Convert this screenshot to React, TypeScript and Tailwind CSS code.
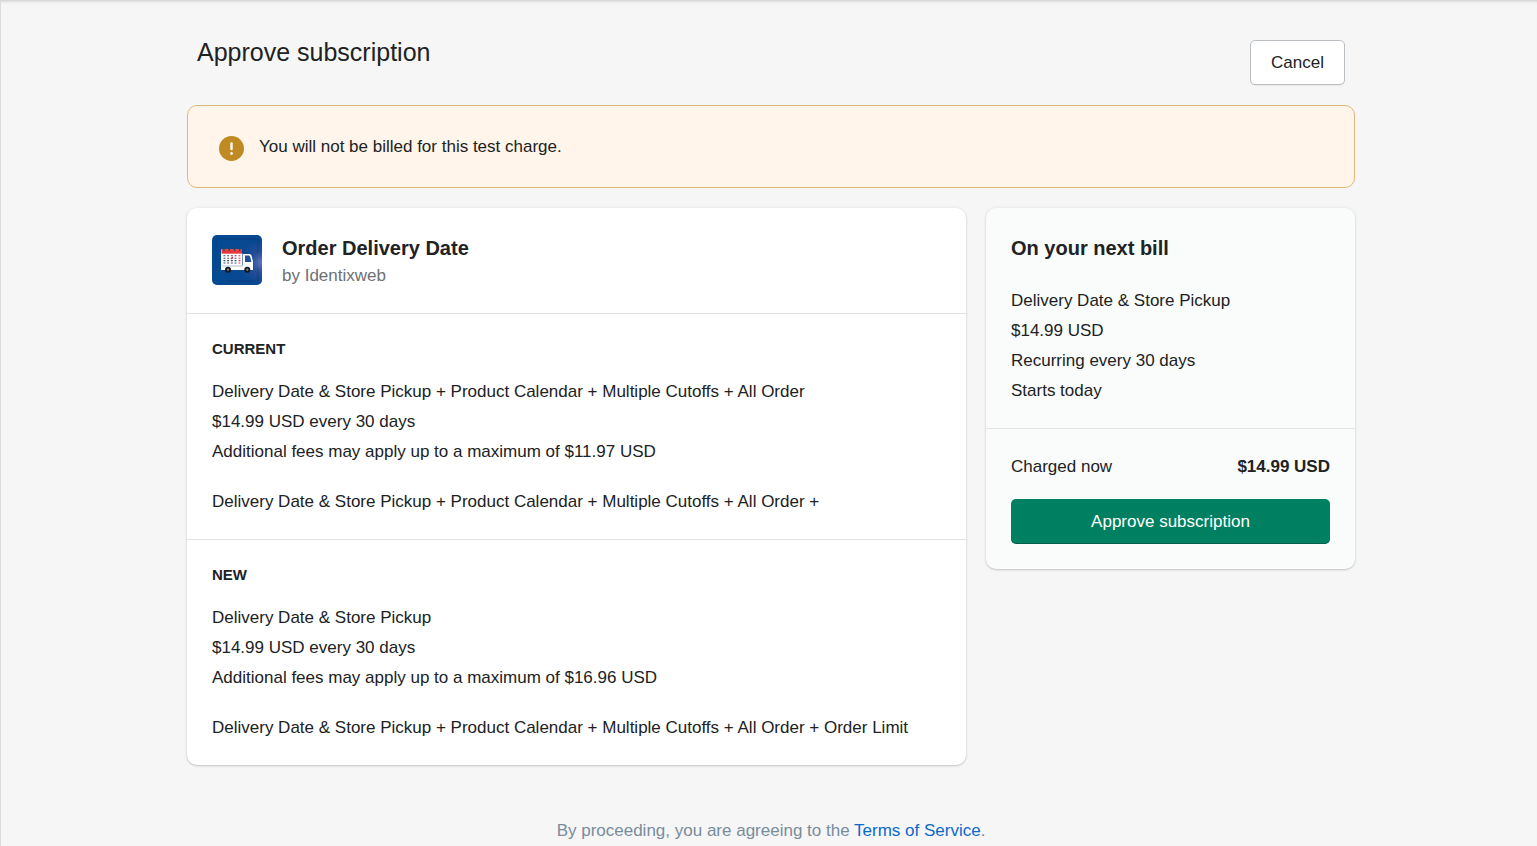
import React from 'react';

const currentPlan = {
  label: 'Current',
  lines: [
    'Delivery Date & Store Pickup + Product Calendar + Multiple Cutoffs + All Order',
    '$14.99 USD every 30 days',
    'Additional fees may apply up to a maximum of $11.97 USD',
  ],
  note: 'Delivery Date & Store Pickup + Product Calendar + Multiple Cutoffs + All Order +',
};

const newPlan = {
  label: 'New',
  lines: [
    'Delivery Date & Store Pickup',
    '$14.99 USD every 30 days',
    'Additional fees may apply up to a maximum of $16.96 USD',
  ],
  note: 'Delivery Date & Store Pickup + Product Calendar + Multiple Cutoffs + All Order + Order Limit',
};

const billLines = [
  'Delivery Date & Store Pickup',
  '$14.99 USD',
  'Recurring every 30 days',
  'Starts today',
];

const AppIcon: React.FC = () => (
  <svg className="mt-0.5 h-[50px] w-[50px] shrink-0 rounded-[5px]" viewBox="0 0 50 50" aria-hidden="true">
    <defs>
      <linearGradient id="iconBg" x1="0" y1="0" x2="1" y2="0">
        <stop offset="0" stopColor="#044a92" />
        <stop offset="1" stopColor="#0a4791" />
      </linearGradient>
      <radialGradient id="iconGlow" cx="1" cy="0.55" r="0.45">
        <stop offset="0" stopColor="#6f7fc0" stopOpacity="0.9" />
        <stop offset="0.5" stopColor="#46559f" stopOpacity="0.45" />
        <stop offset="1" stopColor="#46559f" stopOpacity="0" />
      </radialGradient>
    </defs>
    <rect width="50" height="50" fill="url(#iconBg)" />
    <rect width="50" height="50" fill="url(#iconGlow)" />
    <path d="M4 26V4h42v14M15 46h31V34" fill="none" stroke="#083a77" strokeWidth="0.6" />

    {/* Truck body */}
    <path d="M9 30h22V19h6q2 0 2.600 1.800L41 26.500V35H9z" fill="#fff" />
    <path d="M33 20.500h3.500q1.200 0 1.600 1.200l1.300 5.300H33z" fill="#1d4f99" />

    {/* Calendar */}
    <rect x="9" y="14.500" width="21" height="16.500" rx="0.600" fill="#fff" />
    <path d="M10 31h20.400V18.500" fill="none" stroke="#9fb2c9" strokeWidth="0.800" />
    <rect x="9.500" y="14.300" width="20.500" height="4.400" fill="#e63a40" />
    <path d="M12 13.300v2M17.200 13.300v2M22.500 13.300v2M27.700 13.300v2" stroke="#3c3f4a" strokeWidth="1.500" strokeLinecap="round" />
    <path
      d="M11.500 20.800h14M11.500 23.200h14M11.500 25.600h14M11.500 28h14"
      stroke="#3d4c68"
      strokeWidth="1.100"
      strokeDasharray="1.900 1.800"
    />
    <path d="M26.500 20.800h1.900M26.500 23.200h1.900M26.500 25.600h1.900M26.500 28h1.900M18.800 24l2.200-2" stroke="#e8323c" strokeWidth="1.100" />

    {/* Wheels */}
    <circle cx="16" cy="34.700" r="3" fill="#16181c" />
    <circle cx="16" cy="34.700" r="1.100" fill="#8b8f96" />
    <circle cx="35.300" cy="34.700" r="3" fill="#16181c" />
    <circle cx="35.300" cy="34.700" r="1.100" fill="#8b8f96" />
  </svg>
);

const WarningIcon: React.FC = () => (
  <svg className="mt-0.5 h-[25px] w-[25px] shrink-0" viewBox="0 0 25 25" aria-hidden="true">
    <circle cx="12.500" cy="12.500" r="12.500" fill="#bf8a22" />
    <path d="M12.500 7.500v5.500" stroke="#fff5ea" strokeWidth="2.500" strokeLinecap="round" />
    <circle cx="12.500" cy="17.500" r="1.400" fill="#fff5ea" />
  </svg>
);

const PlanSection: React.FC<{ plan: typeof currentPlan }> = ({ plan }) => (
  <section className="border-t border-[#e1e3e5] p-[25px]">
    <h3 className="mb-5 text-[15px] leading-5 font-bold uppercase">{plan.label}</h3>
    <ul className="flex flex-col gap-[5px]">
      {plan.lines.map((line) => (
        <li key={line}>{line}</li>
      ))}
    </ul>
    <p className="mt-[25px]">{plan.note}</p>
  </section>
);

const cardShadow = 'shadow-[0_0_4px_rgba(23,24,24,0.06),0_1px_2px_rgba(0,0,0,0.18)]';

const App: React.FC = () => {
  return (
    <div className="min-h-screen border-l border-[#dcdcdc] bg-[#f6f6f6] pl-1 font-['Liberation_Sans',Arial,sans-serif] text-[17px] leading-[25px] text-[#202223] shadow-[inset_0_4px_4px_-4px_rgba(0,0,0,0.3)]">
      <div className="mx-auto max-w-[1168px] pt-[35px]">
        <header className="flex items-start justify-between px-[10px]">
          <h1 className="text-[25px] leading-[35px]">Approve subscription</h1>
          <button
            type="button"
            className="mt-[5px] h-[45px] rounded-[5px] border border-[#babfc3] bg-white px-5 shadow-[0_1px_0_rgba(0,0,0,0.05)]"
          >
            Cancel
          </button>
        </header>

        <div role="status" className="mt-5 flex gap-[15px] rounded-[10px] border border-[#e1b878] bg-[#fff5ea] px-[31px] pt-7 pb-[26px]">
          <WarningIcon />
          <p>You will not be billed for this test charge.</p>
        </div>

        <main className="mt-5 grid grid-cols-[19fr_9fr] items-start gap-5">
          <div className={`rounded-[10px] bg-white ${cardShadow}`}>
            <div className="flex gap-5 p-[25px]">
              <AppIcon />
              <div>
                <h2 className="text-[20px] leading-[30px] font-bold">Order Delivery Date</h2>
                <p className="text-[#6d7175]">by Identixweb</p>
              </div>
            </div>
            <PlanSection plan={currentPlan} />
            <PlanSection plan={newPlan} />
          </div>

          <aside className={`rounded-[10px] bg-[#fafcfb] ${cardShadow}`}>
            <div className="p-[25px]">
              <h2 className="mb-[25px] text-[20px] leading-[30px] font-bold">On your next bill</h2>
              <ul className="flex flex-col gap-[5px]">
                {billLines.map((line) => (
                  <li key={line}>{line}</li>
                ))}
              </ul>
            </div>
            <div className="border-t border-[#e1e3e5] p-[25px]">
              <div className="flex justify-between">
                <span>Charged now</span>
                <span className="font-bold">$14.99 USD</span>
              </div>
              <button
                type="button"
                className="mt-5 h-[45px] w-full rounded-[5px] bg-[#008060] text-white shadow-[inset_0_-1px_0_rgba(0,0,0,0.25)]"
              >
                Approve subscription
              </button>
            </div>
          </aside>
        </main>

        <footer className="mt-[53px] text-center text-[#798c9c]">
          By proceeding, you are agreeing to the{' '}
          <a href="#terms" className="text-[#0b69cb]">
            Terms of Service
          </a>
          .
        </footer>
      </div>
    </div>
  );
};

export default App;
